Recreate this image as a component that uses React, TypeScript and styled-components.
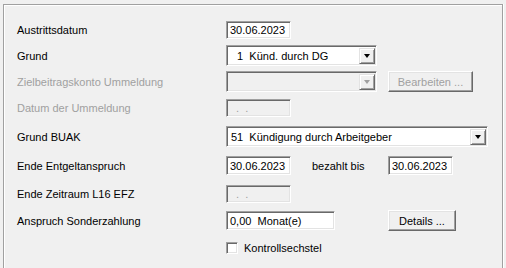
import React from "react";
import styled, { createGlobalStyle } from "styled-components";

const Global = createGlobalStyle`
  html, body {
    margin: 0;
    padding: 0;
    background: #f0f0f0;
  }
  body {
    font-family: "Liberation Sans", Arial, sans-serif;
    font-size: 11px;
    color: #000;
  }
`;

const Page = styled.div`
  width: 506px;
  height: 268px;
  padding: 4px 0 0 3px;
  box-sizing: border-box;
  overflow: hidden;
`;

const GroupBox = styled.div`
  width: 500px;
  height: 280px;
  box-sizing: border-box;
  border: 1px solid #a0a0a0;
  border-bottom: none;
  box-shadow: inset 1px 1px #fff, 1px 0 #fff;
  padding: 0 0 0 13px;
  display: flex;
  flex-direction: column;
`;

const Row = styled.div<{ $gap: number; $h: number }>`
  display: flex;
  align-items: center;
  margin-top: ${(p) => p.$gap}px;
  height: ${(p) => p.$h}px;
`;

const Label = styled.div<{ $disabled?: boolean }>`
  width: 209px;
  flex: none;
  white-space: nowrap;
  color: ${(p) => (p.$disabled ? "#a0a0a0" : "#000")};
`;

const Sunken = styled.div<{ $w: number; $h: number; $disabled?: boolean }>`
  width: ${(p) => p.$w}px;
  height: ${(p) => p.$h}px;
  box-sizing: border-box;
  flex: none;
  border: 1px solid;
  border-color: #a0a0a0 #fff #fff #a0a0a0;
  box-shadow: inset 1px 1px #696969, inset -1px -1px #e3e3e3;
  background: ${(p) => (p.$disabled ? "#f0f0f0" : "#fff")};
  color: ${(p) => (p.$disabled ? "#a0a0a0" : "#000")};
  display: flex;
  align-items: center;
  padding: 0 2px 0 3px;
  white-space: pre;
`;

const ComboText = styled.div`
  flex: 1;
  white-space: pre;
  padding-left: 1px;
`;

const DropButton = styled.div<{ $disabled?: boolean }>`
  width: 16px;
  height: 16px;
  box-sizing: border-box;
  flex: none;
  margin-right: -1px;
  background: #f0f0f0;
  border: 1px solid;
  border-color: #e3e3e3 #696969 #696969 #e3e3e3;
  box-shadow: inset 1px 1px #fff, inset -1px -1px #a0a0a0;
  display: flex;
  align-items: center;
  justify-content: center;

  &::after {
    content: "";
    display: block;
    width: 0;
    height: 0;
    margin-top: 1px;
    border-left: 3.5px solid transparent;
    border-right: 3.5px solid transparent;
    border-top: 4px solid ${(p) => (p.$disabled ? "#a0a0a0" : "#000")};
  }
`;

const Button = styled.div<{ $w: number; $disabled?: boolean; $ml: number }>`
  width: ${(p) => p.$w}px;
  height: 21px;
  margin-left: ${(p) => p.$ml}px;
  box-sizing: border-box;
  border: 1px solid;
  border-color: #fff #696969 #696969 #fff;
  box-shadow: inset -1px -1px #a0a0a0, inset 1px 1px #e3e3e3;
  display: flex;
  align-items: center;
  justify-content: center;
  color: ${(p) => (p.$disabled ? "#a0a0a0" : "#000")};
  white-space: nowrap;
`;

const Inline = styled.div<{ $ml: number; $w: number }>`
  margin-left: ${(p) => p.$ml}px;
  width: ${(p) => p.$w}px;
  white-space: nowrap;
`;

const CheckRow = styled.div`
  display: flex;
  align-items: center;
  margin-top: 12px;
  padding-left: 209px;
`;

const CheckBox = styled.div`
  width: 12px;
  height: 12px;
  box-sizing: border-box;
  border: 1px solid;
  border-color: #a0a0a0 #fff #fff #a0a0a0;
  box-shadow: inset 1px 1px #696969, inset -1px -1px #e3e3e3;
  background: #fff;
  margin-right: 6px;
`;

const Combo = ({ w, text, disabled }: { w: number; text: string; disabled?: boolean }) => (
  <Sunken $w={w} $h={21} $disabled={disabled} style={{ paddingRight: 2 }}>
    <ComboText>{text}</ComboText>
    <DropButton $disabled={disabled} />
  </Sunken>
);

export default function App() {
  return (
    <Page>
      <Global />
      <GroupBox>
        <Row $gap={16} $h={18}>
          <Label>Austrittsdatum</Label>
          <Sunken $w={65} $h={18}>30.06.2023</Sunken>
        </Row>
        <Row $gap={6} $h={21}>
          <Label>Grund</Label>
          <Combo w={151} text={"  1  Künd. durch DG"} />
        </Row>
        <Row $gap={5} $h={21}>
          <Label $disabled>Zielbeitragskonto Ummeldung</Label>
          <Combo w={151} text="" disabled />
          <Button $w={85} $ml={11} $disabled>Bearbeiten ...</Button>
        </Row>
        <Row $gap={7} $h={18}>
          <Label $disabled>Datum der Ummeldung</Label>
          <Sunken $w={65} $h={18} $disabled>{"  .  ."}</Sunken>
        </Row>
        <Row $gap={9} $h={21}>
          <Label>Grund BUAK</Label>
          <Combo w={262} text={"51  Kündigung durch Arbeitgeber"} />
        </Row>
        <Row $gap={9} $h={19}>
          <Label>Ende Entgeltanspruch</Label>
          <Sunken $w={65} $h={19}>30.06.2023</Sunken>
          <Inline $ml={21} $w={76}>bezahlt bis</Inline>
          <Sunken $w={65} $h={19}>30.06.2023</Sunken>
        </Row>
        <Row $gap={10} $h={18}>
          <Label>Ende Zeitraum L16 EFZ</Label>
          <Sunken $w={65} $h={18} $disabled>{"  .  ."}</Sunken>
        </Row>
        <Row $gap={8} $h={19}>
          <Label>Anspruch Sonderzahlung</Label>
          <Sunken $w={109} $h={19}>{"0,00  Monat(e)"}</Sunken>
          <Button $w={68} $ml={53}>Details ...</Button>
        </Row>
        <CheckRow>
          <CheckBox />
          <span>Kontrollsechstel</span>
        </CheckRow>
      </GroupBox>
    </Page>
  );
}
